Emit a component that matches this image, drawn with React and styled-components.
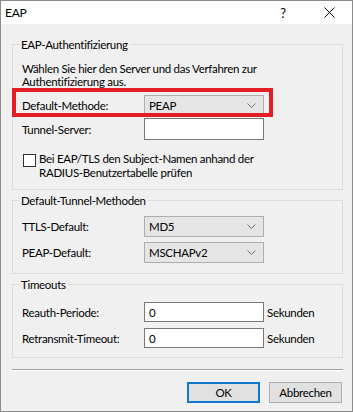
import React from "react";
import styled, { createGlobalStyle } from "styled-components";

const GlobalStyle = createGlobalStyle`
  html, body {
    margin: 0;
    padding: 0;
    background: #ffffff;
  }
  body {
    font-family: Lato, "Liberation Sans", sans-serif;
    font-size: 11.5px;
    letter-spacing: -0.3px;
    color: #000;
  }
  * {
    box-sizing: border-box;
  }
`;

const Window = styled.div`
  width: 353px;
  height: 412px;
  border: 1px solid #8c8c8c;
  background: #f0f0f0;
  display: flex;
  flex-direction: column;
  overflow: hidden;
`;

const TitleBar = styled.div`
  height: 23px;
  background: #ffffff;
  display: flex;
  align-items: center;
  padding-left: 4px;
`;

const Title = styled.span`
  flex: 1;
  font-size: 12px;
`;

const TitleButton = styled.div`
  width: 46px;
  height: 23px;
  display: flex;
  align-items: center;
  justify-content: center;
  font-size: 13px;
`;

const Content = styled.div`
  padding: 13px 9px 0 11px;
  display: flex;
  flex-direction: column;
`;

const Group = styled.fieldset`
  margin: ${(p) => p.$mt || 0}px 0 0 0;
  border: 1px solid #dcdcdc;
  padding: ${(p) => p.$pt}px 9px ${(p) => p.$pb}px 9px;
  min-width: 0;
`;

const Legend = styled.legend`
  padding: 0 2px;
  margin-left: -3px;
  line-height: 15px;
`;

const Description = styled.div`
  line-height: 13px;
`;

const Row = styled.div`
  position: relative;
  display: flex;
  align-items: center;
  height: ${(p) => p.$h || 21}px;
  margin-top: ${(p) => p.$mt || 0}px;
`;

const Label = styled.div`
  width: 122px;
  flex-shrink: 0;
`;

const Select = styled.div`
  width: 120px;
  height: 21px;
  border: 1px solid #adadad;
  background: #e5e5e5;
  display: flex;
  align-items: center;
  justify-content: space-between;
  padding: 0 7px 0 4px;
`;

const TextBox = styled.div`
  width: 120px;
  height: ${(p) => p.$h || 20}px;
  border: 1px solid #7a7a7a;
  background: #ffffff;
  display: flex;
  align-items: center;
  padding-left: 4px;
`;

const Unit = styled.span`
  margin-left: 3px;
`;

// red annotation frame drawn over the Default-Methode row
const Highlight = styled.div`
  position: absolute;
  left: -10px;
  top: -7px;
  width: 261px;
  height: 29px;
  border: 4px solid #e31e27;
  pointer-events: none;
`;

const CheckRow = styled.div`
  display: flex;
  align-items: flex-start;
  margin: ${(p) => p.$mt}px 0 0 1px;
`;

const CheckBox = styled.div`
  width: 13px;
  height: 13px;
  flex-shrink: 0;
  margin: 2px 3px 0 0;
  border: 1px solid #333333;
  background: #ffffff;
`;

const CheckText = styled.div`
  line-height: 14px;
`;

const Separator = styled.div`
  height: 2px;
  margin-top: 11px;
  border-top: 1px solid #a0a0a0;
  border-bottom: 1px solid #ffffff;
`;

const ButtonBar = styled.div`
  display: flex;
  justify-content: flex-end;
  gap: 9px;
  margin-top: 11px;
  padding-right: 1px;
`;

const Button = styled.div`
  width: 73px;
  height: 21px;
  display: flex;
  align-items: center;
  justify-content: center;
  background: #e1e1e1;
  border: ${(p) => (p.$default ? "2px solid #0f78cf" : "1px solid #adadad")};
`;

const Chevron = () => (
  <svg width="9" height="5" viewBox="0 0 9 5">
    <path d="M0.5 0.5 L4.5 4.5 L8.5 0.5" fill="none" stroke="#707070" strokeWidth="1" />
  </svg>
);

const CloseIcon = () => (
  <svg width="11" height="11" viewBox="0 0 11 11">
    <path d="M0.5 0.5 L10.5 10.5 M10.5 0.5 L0.5 10.5" stroke="#000" strokeWidth="1" />
  </svg>
);

const Combo = ({ value }) => (
  <Select>
    <span>{value}</span>
    <Chevron />
  </Select>
);

export default function App() {
  return (
    <>
      <GlobalStyle />
      <Window>
        <TitleBar>
          <Title>EAP</Title>
          <TitleButton>?</TitleButton>
          <TitleButton>
            <CloseIcon />
          </TitleButton>
        </TitleBar>
        <Content>
          <Group $pt={10} $pb={9}>
            <Legend>EAP-Authentifizierung</Legend>
            <Description>
              Wählen Sie hier den Server und das Verfahren zur
              <br />
              Authentifizierung aus.
            </Description>
            <Row $mt={7}>
              <Label>Default-Methode:</Label>
              <Combo value="PEAP" />
              <Highlight />
            </Row>
            <Row $mt={2} $h={22}>
              <Label>Tunnel-Server:</Label>
              <TextBox $h={22} />
            </Row>
            <CheckRow $mt={12}>
              <CheckBox />
              <CheckText>
                Bei EAP/TLS den Subject-Namen anhand der
                <br />
                RADIUS-Benutzertabelle prüfen
              </CheckText>
            </CheckRow>
          </Group>

          <Group $mt={3} $pt={8} $pb={10}>
            <Legend>Default-Tunnel-Methoden</Legend>
            <Row>
              <Label>TTLS-Default:</Label>
              <Combo value="MD5" />
            </Row>
            <Row $mt={5}>
              <Label>PEAP-Default:</Label>
              <Combo value="MSCHAPv2" />
            </Row>
          </Group>

          <Group $mt={3} $pt={10} $pb={9}>
            <Legend>Timeouts</Legend>
            <Row $h={20}>
              <Label>Reauth-Periode:</Label>
              <TextBox>0</TextBox>
              <Unit>Sekunden</Unit>
            </Row>
            <Row $h={20} $mt={6}>
              <Label>Retransmit-Timeout:</Label>
              <TextBox>0</TextBox>
              <Unit>Sekunden</Unit>
            </Row>
          </Group>

          <Separator />
          <ButtonBar>
            <Button $default>OK</Button>
            <Button>Abbrechen</Button>
          </ButtonBar>
        </Content>
      </Window>
    </>
  );
}
